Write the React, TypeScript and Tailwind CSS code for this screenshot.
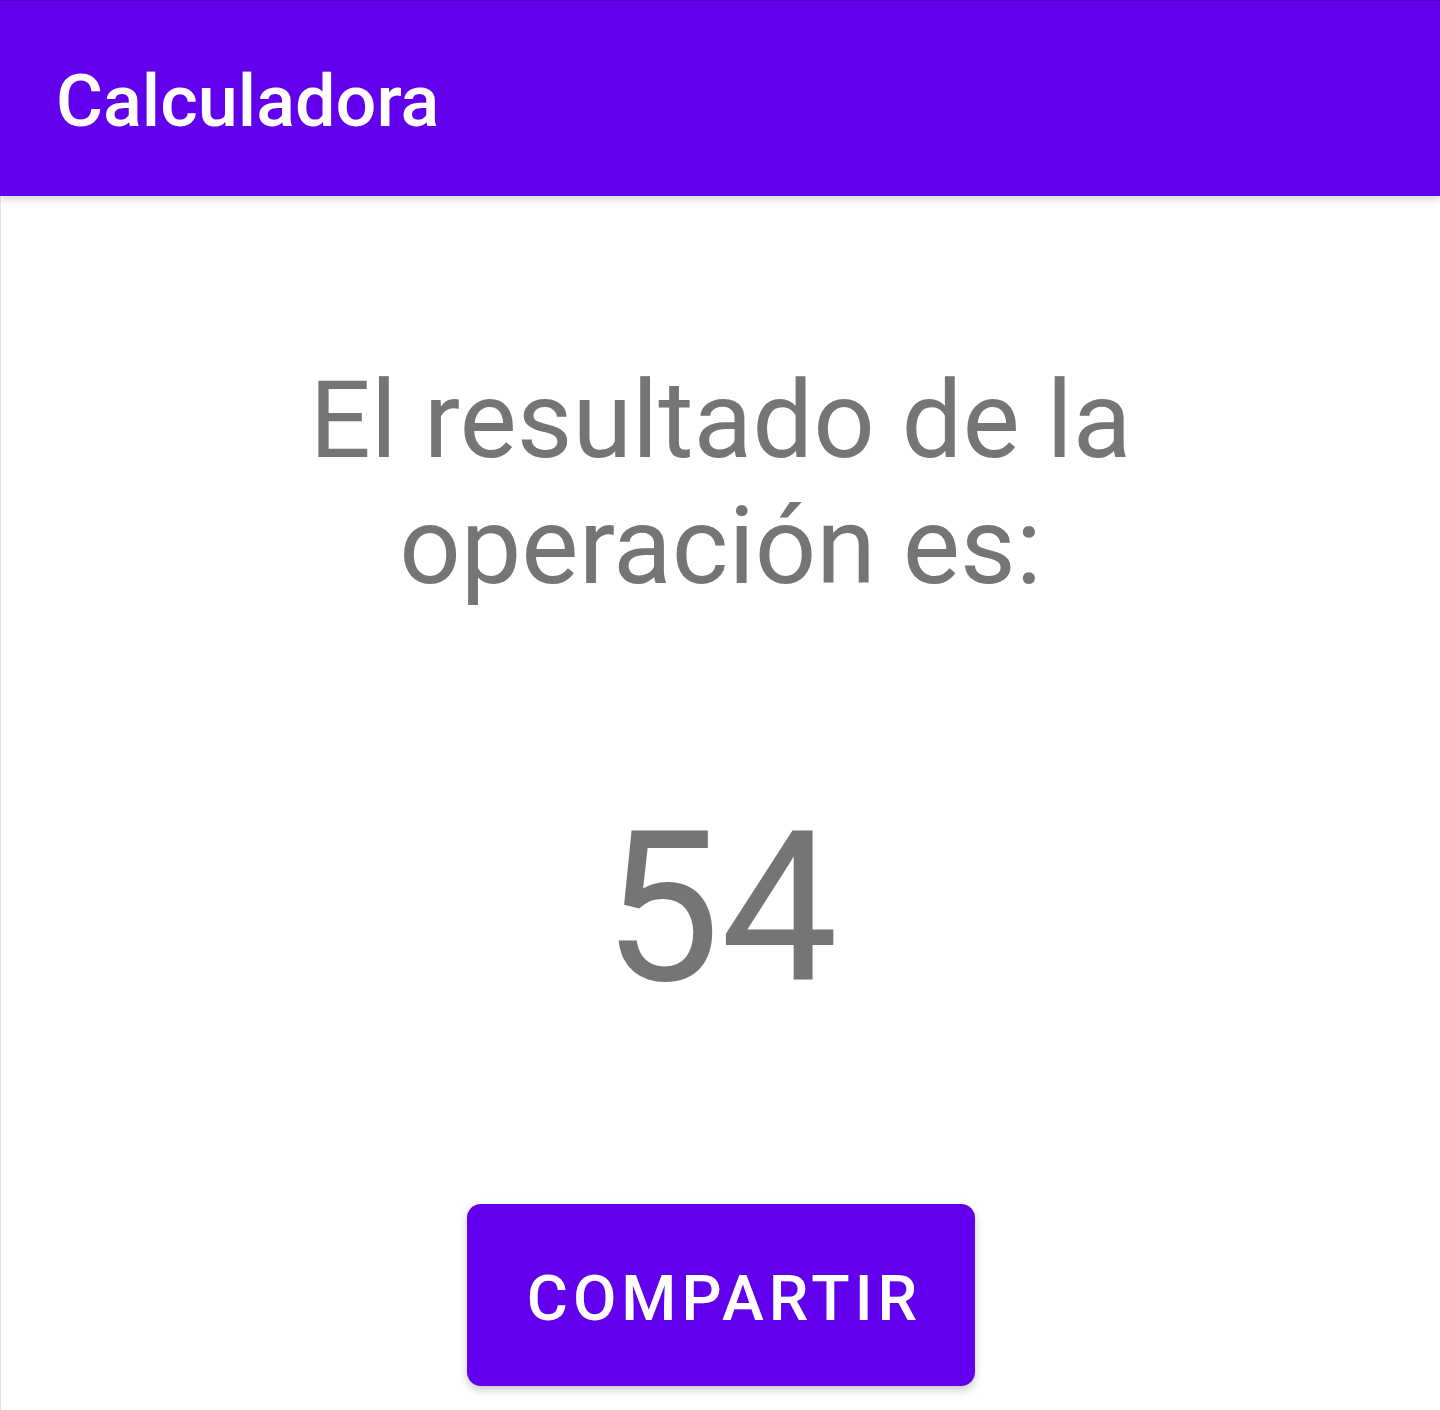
import React from "react";

export default function App() {
  return (
    <div className="relative h-[1410px] w-[1440px] overflow-hidden bg-white" style={{ fontFamily: "Roboto, 'Noto Sans', sans-serif" }}>
      <header className="relative z-10 flex h-[196px] items-center border-t border-[#4c00c4] bg-[#6200ee] pl-[56px] shadow-[0_3px_8px_rgba(0,0,0,0.18)]">
        <h1 className="mt-[6px] text-[72px] font-medium leading-[84px] text-white">Calculadora</h1>
      </header>
      <main className="flex h-[1214px] flex-col items-center border-l border-[#e3e3e3]">
        <p className="mt-[161px] w-[900px] text-center text-[108px] leading-[126px] text-[#757575]">
          El resultado de la operación es:
        </p>
        <p className="mt-[178px] text-[209px] leading-[244px] text-[#757575]">54</p>
        <button className="mt-[173px] flex h-[182px] w-[508px] items-center justify-center rounded-[14px] bg-[#6200ee] pt-[8px] pl-[8px] text-[63px] font-medium tracking-[5px] text-white shadow-[0_4px_8px_rgba(0,0,0,0.22)]">
          COMPARTIR
        </button>
      </main>
    </div>
  );
}
